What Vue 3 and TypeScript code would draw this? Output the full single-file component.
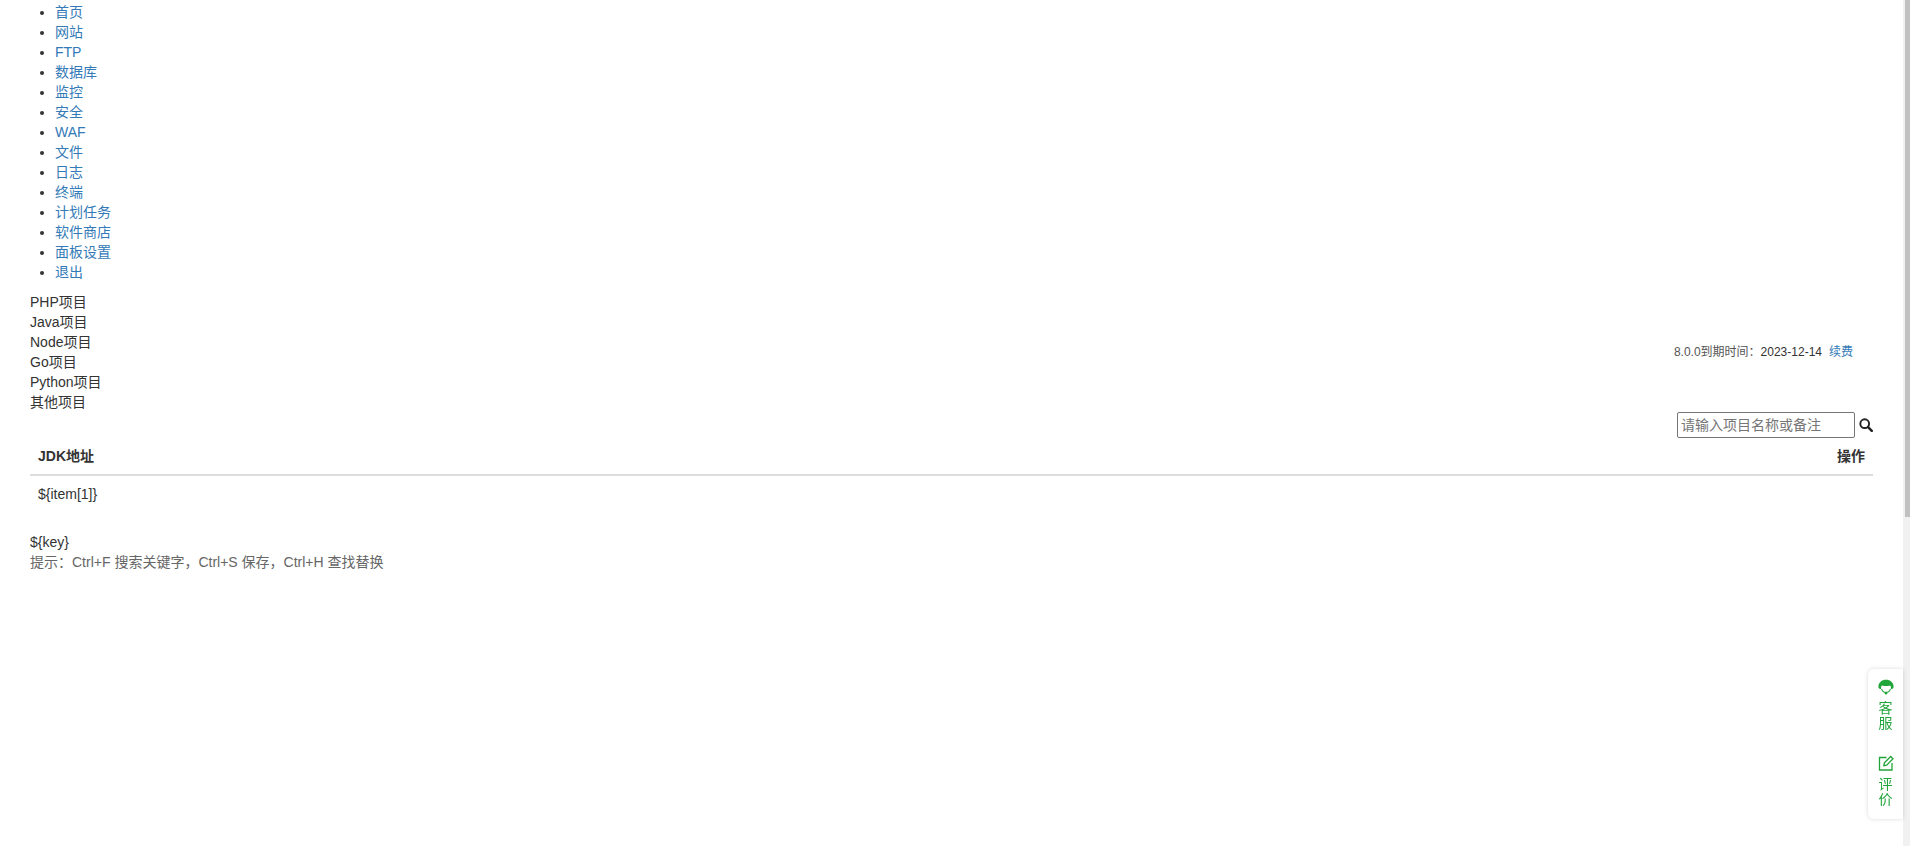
<template>
  <div class="page">
    <div class="main">
      <ul class="nav">
        <li v-for="item in navItems" :key="item"><a href="#">{{ item }}</a></li>
      </ul>

      <div class="content">
        <div class="top-row">
          <div class="tabs">
            <div v-for="tab in tabs" :key="tab">{{ tab }}</div>
          </div>
          <div class="expire">
            <span class="version">8.0.0到期时间：</span><span>2023-12-14</span><a href="#" class="renew">续费</a>
          </div>
        </div>

        <div class="search-row">
          <input class="search" type="text" placeholder="请输入项目名称或备注" />
          <svg class="search-icon" viewBox="0 0 16 16" width="14" height="14">
            <circle cx="6.5" cy="6.5" r="5" fill="none" stroke="#222" stroke-width="2.200" />
            <path d="M10.400 10.400l4.200 4.200" stroke="#222" stroke-width="2.800" stroke-linecap="round" />
          </svg>
        </div>

        <table class="table">
          <thead>
            <tr>
              <th>JDK地址</th>
              <th class="right">操作</th>
            </tr>
          </thead>
          <tbody>
            <tr>
              <td>${item[1]}</td>
              <td></td>
            </tr>
          </tbody>
        </table>

        <div class="key">${key}</div>
        <div class="hint">提示：Ctrl+F 搜索关键字，Ctrl+S 保存，Ctrl+H 查找替换</div>
      </div>
    </div>

    <div class="scrollbar">
      <div class="thumb"></div>
    </div>

    <div class="float-bar">
      <div class="float-item">
        <svg viewBox="0 0 16 16" width="16" height="16">
          <path d="M.4 7.800C.4 3.500 3.800.8 8 .8s7.600 2.700 7.600 7c0 1.300-.8 2.200-1.800 2.200h-.9c.2-1.400 0-2.700-.8-3.600-2.600.9-5.600.9-8.200 0-.8.900-1 2.200-.8 3.600h-.9C1.200 10 .4 9.100.4 7.800z" fill="#20a53a" />
          <path d="M3.600 9.800c.6 2.200 2.400 3.600 4.400 3.600s3.800-1.400 4.400-3.600" fill="none" stroke="#20a53a" stroke-width="1.100" />
          <circle cx="8" cy="14.200" r="1.200" fill="#20a53a" />
        </svg>
        <span>客<br />服</span>
      </div>
      <div class="float-item">
        <svg viewBox="0 0 16 16" width="16" height="16">
          <path d="M8.500 2.500H1.500v12.500H14V8" fill="none" stroke="#20a53a" stroke-width="1.300" />
          <path d="M5.800 10.700l.6-2.900L12.700 1.500l2.300 2.300-6.300 6.300z" fill="none" stroke="#20a53a" stroke-width="1.300" />
        </svg>
        <span>评<br />价</span>
      </div>
    </div>
  </div>
</template>

<script setup lang="ts">
const navItems: string[] = [
  '首页',
  '网站',
  'FTP',
  '数据库',
  '监控',
  '安全',
  'WAF',
  '文件',
  '日志',
  '终端',
  '计划任务',
  '软件商店',
  '面板设置',
  '退出'
]

const tabs: string[] = ['PHP项目', 'Java项目', 'Node项目', 'Go项目', 'Python项目', '其他项目']
</script>

<style>
html {
  overflow: hidden;
}

body {
  background: #fff;
}
</style>

<style scoped>
.page {
  display: flex;
  height: 100vh;
  overflow: hidden;
  font-family: 'Liberation Sans', 'Noto Sans CJK SC', sans-serif;
  font-size: 14px;
  line-height: 20px;
  color: #333;
}

.main {
  flex: 1;
  min-width: 0;
  padding-top: 2px;
}

.scrollbar {
  width: 7px;
  padding-left: 2px;
  box-sizing: border-box;
  background: #f1f1f1;
}

.thumb {
  height: 517px;
  background: #c1c1c1;
}

.nav {
  margin: 0 0 10px;
  padding: 0 0 0 55px;
}

.nav a {
  color: #337ab7;
  text-decoration: none;
}

.content {
  padding: 0 30px;
}

.top-row {
  display: flex;
  justify-content: space-between;
  align-items: center;
}

.expire {
  font-size: 12px;
  color: #333;
  margin-right: 20px;
}

.version {
  color: #555;
}

.renew {
  color: #337ab7;
  margin-left: 7px;
  text-decoration: none;
}

.search-row {
  display: flex;
  justify-content: flex-end;
  align-items: center;
  gap: 4px;
}

.search {
  box-sizing: border-box;
  width: 178px;
  height: 26px;
  padding: 1px 3px;
  border: 1px solid #767676;
  border-radius: 2px;
  font: inherit;
}

.search::placeholder {
  color: #757575;
}

.search-icon {
  display: block;
}

.table {
  width: 100%;
  border-collapse: collapse;
}

.table th {
  padding: 8px;
  text-align: left;
  font-weight: 700;
  border-bottom: 2px solid #ddd;
}

.table th.right {
  text-align: right;
}

.table td {
  padding: 8px;
}

.key {
  margin-top: 20px;
}

.hint {
  color: #666;
}

.float-bar {
  position: fixed;
  right: 7px;
  bottom: 27px;
  width: 35px;
  height: 150px;
  padding-top: 10px;
  box-sizing: border-box;
  background: #fff;
  border-radius: 6px 0 0 6px;
  box-shadow: 0 0 4px rgba(0, 0, 0, 0.15);
  display: flex;
  flex-direction: column;
  align-items: center;
  gap: 24px;
  color: #20a53a;
  line-height: 15px;
}

.float-item {
  display: flex;
  flex-direction: column;
  align-items: center;
  gap: 6px;
  text-align: center;
}

.float-item svg {
  display: block;
}
</style>
